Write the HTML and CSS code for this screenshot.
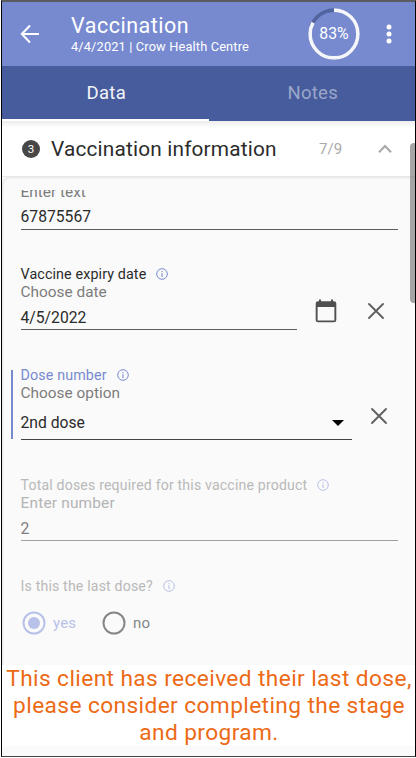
FILE: index.html
```html
<!DOCTYPE html>
<html lang="en">
<head>
<meta charset="utf-8">
<title>Vaccination</title>
<link rel="stylesheet" href="styles.css">
</head>
<body>
<svg class="defs" width="0" height="0">
  <symbol id="info" viewBox="0 0 12 12"><circle cx="6" cy="6" r="5.3" fill="none" stroke="currentColor" stroke-width="1"/><path d="M6 5.2V8.9M6 3.1V4.2" stroke="currentColor" stroke-width="1.1"/></symbol>
  <symbol id="close" viewBox="0 0 18 18"><path d="M2 2L16 16M16 2L2 16" stroke="currentColor" stroke-width="1.9" stroke-linecap="round"/></symbol>
</svg>
<div class="screen">
  <header class="appbar">
    <svg class="back" width="20" height="20" viewBox="0 0 20 20"><path d="M19 10H2.2M10 1.5L1.8 10L10 18.5" fill="none" stroke="#fff" stroke-width="2"/></svg>
    <div class="titles">
      <h1 class="title">Vaccination</h1>
      <div class="subtitle">4/4/2021 | Crow Health Centre</div>
    </div>
    <div class="progress">
      <svg width="52" height="52" viewBox="0 0 52 52"><circle cx="26" cy="26" r="23.9" fill="none" stroke="#52649f" stroke-width="3.6"/><circle cx="26" cy="26" r="23.9" fill="none" stroke="#f5f6fb" stroke-width="3.6" pathLength="100" stroke-dasharray="83 17" transform="rotate(-90 26 26)"/></svg>
      <span class="percent">83%</span>
    </div>
    <svg class="more" width="6" height="20" viewBox="0 0 6 20"><g fill="#fff"><circle cx="3" cy="3" r="2.5"/><circle cx="3" cy="10" r="2.5"/><circle cx="3" cy="17" r="2.5"/></g></svg>
  </header>
  <nav class="tabs">
    <div class="tab active"><span>Data</span></div>
    <div class="tab"><span>Notes</span></div>
  </nav>
  <section class="section-head">
    <span class="step">3</span>
    <h2 class="section-title">Vaccination information</h2>
    <span class="count">7/9</span>
    <svg class="chevron" width="14" height="10" viewBox="0 0 14 10"><path d="M1 8.3L7 2L13 8.3" fill="none" stroke="#aaa" stroke-width="2.2"/></svg>
  </section>
  <main class="form">
    <div class="viewport">
      <div class="field lot">
        <div class="hint">Enter text</div>
        <div class="value">67875567</div>
      </div>
      <div class="field expiry">
        <div class="label"><span>Vaccine expiry date</span><svg class="info"><use href="#info"/></svg></div>
        <div class="hint">Choose date</div>
        <div class="row">
          <div class="value">4/5/2022</div>
          <svg class="calendar" width="22" height="24" viewBox="0 0 22 24"><path d="M3 2.2H4V0.5H6V2.2H16V0.5H18V2.2H19Q21.3 2.2 21.3 4.5V21Q21.3 23.3 19 23.3H3Q0.7 23.3 0.7 21V4.5Q0.7 2.2 3 2.2ZM2.6 8V21.4H19.4V8Z" fill="#505050" fill-rule="evenodd"/></svg>
          <svg class="close"><use href="#close"/></svg>
        </div>
      </div>
      <div class="field dose">
        <div class="label"><span>Dose number</span><svg class="info"><use href="#info"/></svg></div>
        <div class="hint">Choose option</div>
        <div class="row">
          <div class="value"><span>2nd dose</span><svg class="caret" width="12" height="6" viewBox="0 0 12 6"><path d="M0 0H12L6 6Z"/></svg></div>
          <svg class="close"><use href="#close"/></svg>
        </div>
      </div>
      <div class="field total disabled">
        <div class="label"><span>Total doses required for this vaccine product</span><svg class="info"><use href="#info"/></svg></div>
        <div class="hint">Enter number</div>
        <div class="value">2</div>
      </div>
      <div class="field last disabled">
        <div class="label"><span>Is this the last dose?</span><svg class="info"><use href="#info"/></svg></div>
        <div class="radios">
          <svg width="24" height="24" viewBox="0 0 24 24"><circle cx="12" cy="12" r="10.5" fill="none" stroke="#b8c1e8" stroke-width="2"/><circle cx="12" cy="12" r="6" fill="#b8c1e8"/></svg>
          <span class="yes">yes</span>
          <svg width="24" height="24" viewBox="0 0 24 24"><circle cx="12" cy="12" r="10.5" fill="none" stroke="#868686" stroke-width="2"/></svg>
          <span class="no">no</span>
        </div>
      </div>
    </div>
  </main>
  <div class="banner">
    <div>This client has received their last dose,</div>
    <div>please consider completing the stage</div>
    <div>and program.</div>
  </div>
  <div class="scrollbar"></div>
</div>
</body>
</html>
```
FILE: styles.css
```css
* { box-sizing: border-box; }
body { margin: 0; background: #fff; font-family: Roboto, "Liberation Sans", sans-serif; color: #2b2b2b; white-space: nowrap; }
svg { display: block; flex: none; }
.defs { position: absolute; }
.screen { position: relative; display: flex; flex-direction: column; width: 415px; height: 757px; margin-left: 1px; border: 1px solid #000; border-top: 2px solid #5c5c60; border-bottom-color: #444; background: #fafafa; overflow: hidden; }
.appbar { display: flex; flex: none; height: 64px; background: #778ad0; color: #fff; }
.back { margin: 22px 0 0 18px; }
.titles { margin-left: 31px; width: 237px; padding-top: 11px; }
.title { margin: 0; font-size: 21.5px; line-height: 26px; font-weight: 400; letter-spacing: .5px; }
.subtitle { font-size: 12.8px; line-height: 16px; letter-spacing: .15px; }
.progress { position: relative; margin-top: 6px; width: 52px; height: 52px; }
.percent { position: absolute; inset: 0; font-size: 15.8px; line-height: 52px; text-align: center; }
.more { margin: 22px 0 0 26px; }
.tabs { display: flex; flex: none; height: 55px; background: #475c9c; color: #9ba6ca; }
.tab { flex: 1; padding-left: 2px; text-align: center; font-size: 18.5px; line-height: 54px; letter-spacing: .3px; }
.active { color: #f3f4fa; border-bottom: 2px solid #fff; }
.section-head { display: flex; flex: none; align-items: center; height: 56px; padding-left: 20px; background: linear-gradient(#ededed, #fff 7px); border-bottom: 1px solid #e8e8e8; }
.step { width: 18px; height: 18px; border-radius: 50%; background: #474747; color: #fff; font-size: 11.5px; line-height: 18px; text-align: center; }
.section-title { width: 268px; margin: 0 0 0 11px; font-size: 20.8px; line-height: 28px; font-weight: 400; letter-spacing: .18px; }
.count { width: 59px; font-size: 15px; color: #aaa; letter-spacing: .1px; }
.form { flex: none; height: 488px; padding-top: 13px; border-radius: 7px 0 0; box-shadow: inset 1px 1px 2px #e4e4e4; }
.viewport { overflow: hidden; height: 475px; padding-left: 18.5px; }
.field { position: relative; width: 377.5px; }
.lot { margin-top: -7px; }
.label { display: flex; align-items: center; gap: 10px; height: 18px; font-size: 14.3px; line-height: 18px; letter-spacing: .12px; }
.info { width: 12px; height: 12px; color: #778ad0; }
.hint { height: 18px; font-size: 15.4px; line-height: 18px; color: #7c7c7c; }
.value { height: 29px; padding-top: 8px; border-bottom: 1.5px solid #5c5c5c; font-size: 15.7px; line-height: 18px; }
.lot .value { padding-top: 7px; }
.row { display: flex; }
.expiry { margin-top: 35px; }
.expiry .value { width: 276px; }
.calendar { margin: -2px 0 0 18px; }
.expiry .close { margin: 1px 0 0 30px; }
.close { width: 18px; height: 18px; color: #606060; }
.dose { margin-top: 36px; }
.dose .label { color: #778ad0; }
.dose::before { content: ""; position: absolute; left: -9.5px; top: 4px; width: 2px; height: 69px; background: #778ad0; }
.dose .value { display: flex; justify-content: space-between; width: 331px; height: 38px; padding: 12px 8px 0 0; border-color: #444; }
.caret { margin-top: 6px; }
.dose .close { margin: 5px 0 0 18px; }
.total { margin-top: 36px; }
.disabled .label { font-size: 14.1px; letter-spacing: .18px; color: #b9b9b9; }
.disabled .hint { color: #b4b4b4; letter-spacing: .2px; }
.disabled .value { color: #7e7e7e; border-color: #a0a0a0; }
.disabled .info { color: #b8c1e8; }
.last { margin-top: 36px; }
.radios { display: flex; align-items: center; margin: 16px 0 0 1.5px; font-size: 15px; line-height: 24px; color: #868686; }
.yes { width: 48px; margin: 0 0 0 7px; color: #b8c1e8; letter-spacing: .2px; }
.yes + svg { margin-left: 1px; }
.no { margin-left: 7px; letter-spacing: .3px; }
.banner { flex: none; height: 81px; padding-left: 1px; background: #fff; color: #ec6a16; font-size: 22.7px; line-height: 27px; text-align: center; letter-spacing: .4px; }
.scrollbar { position: absolute; right: -3px; top: 141px; width: 8px; height: 160px; border-radius: 4px; background: rgba(120,120,120,.65); }
```
